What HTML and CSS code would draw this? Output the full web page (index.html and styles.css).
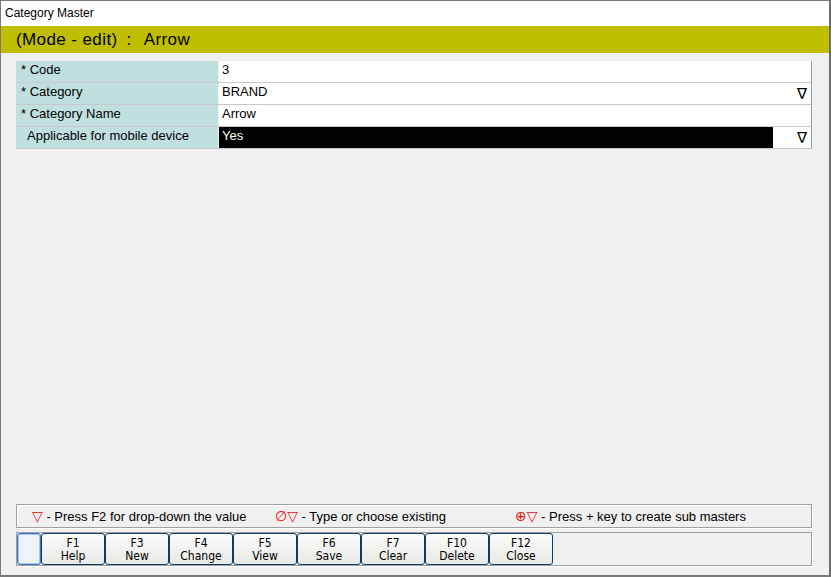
FILE: index.html
```html
<!DOCTYPE html>
<html>
<head>
<meta charset="utf-8">
<link rel="stylesheet" href="styles.css">
</head>
<body>
<div class="window">
  <div class="titlebar">Category Master</div>
  <div class="modebar"><span>(Mode - edit)</span><span class="colon">:</span><span>Arrow</span></div>
  <div class="form">
    <div class="row">
      <div class="label">* Code</div>
      <div class="value">3</div>
    </div>
    <div class="row">
      <div class="label">* Category</div>
      <div class="value">BRAND<span class="dd">∇</span></div>
    </div>
    <div class="row">
      <div class="label">* Category Name</div>
      <div class="value">Arrow</div>
    </div>
    <div class="row last">
      <div class="label indent">Applicable for mobile device</div>
      <div class="value split"><span class="sel">Yes</span><span class="dd">∇</span></div>
    </div>
  </div>
  <div class="spacer"></div>
  <div class="legend">
    <span class="item"><span class="red">▽</span> - Press F2 for drop-down the value</span>
    <span class="item"><span class="red">∅▽</span> - Type or choose existing</span>
    <span class="item"><span class="red">⊕▽</span> - Press + key to create sub masters</span>
  </div>
  <div class="buttons">
    <div class="btn focus"></div>
    <div class="btn">F1<br>Help</div>
    <div class="btn">F3<br>New</div>
    <div class="btn">F4<br>Change</div>
    <div class="btn">F5<br>View</div>
    <div class="btn">F6<br>Save</div>
    <div class="btn">F7<br>Clear</div>
    <div class="btn">F10<br>Delete</div>
    <div class="btn">F12<br>Close</div>
  </div>
</div>
</body>
</html>
```
FILE: styles.css
```css
html, body {
  margin: 0;
  padding: 0;
}
body {
  font-family: "Liberation Sans", Arial, sans-serif;
  font-size: 13px;
  color: #000;
}
.window {
  width: 831px;
  height: 577px;
  box-sizing: border-box;
  border: 1px solid #7a7a7a;
  border-right: 2px solid #6e6e6e;
  border-bottom: 2px solid #7a7a7a;
  background: #f0f0f0;
  display: flex;
  flex-direction: column;
}
.titlebar {
  height: 25px;
  background: #fff;
  font-size: 12px;
  line-height: 24px;
  padding-left: 4px;
}
.modebar {
  height: 27px;
  background: #bfbf00;
  font-size: 17px;
  letter-spacing: 0.4px;
  line-height: 28px;
  padding-left: 15px;
  display: flex;
}
.modebar .colon {
  margin: 0 12px 0 9px;
}
.form {
  margin: 8px 17px 0 15px;
  border-right: 1px solid #a0a0a0;
  display: flex;
  flex-direction: column;
}
.row {
  display: flex;
  height: 22px;
  border-bottom: 1px solid #c8c8c8;
  box-sizing: border-box;
}
.label {
  width: 202px;
  background: #c0e0e0;
  padding-left: 5px;
  line-height: 18px;
  box-sizing: border-box;
  margin-right: 1px;
}
.label.indent {
  padding-left: 11px;
}
.value {
  flex: 1;
  background: #fff;
  display: flex;
  align-items: flex-start;
  padding-left: 3px;
  line-height: 18px;
}
.value.split {
  padding-left: 0;
}
.sel {
  background: #000;
  color: #fffff0;
  width: 554px;
  height: 100%;
  padding-left: 3px;
  box-sizing: border-box;
  line-height: 18px;
}
.dd {
  margin-left: auto;
  margin-right: 4px;
  font-size: 15px;
  line-height: 22px;
  font-family: "DejaVu Sans", sans-serif;
}
.spacer {
  flex: 1;
}
.legend {
  margin: 0 17px 0 15px;
  height: 24px;
  box-sizing: border-box;
  border: 1px solid #a0a0a0;
  box-shadow: 1px 1px 0 #fff inset, 1px 1px 0 #fff;
  display: flex;
  align-items: center;
  padding-left: 15px;
  font-size: 13px;
}
.legend .item:nth-child(1) {
  width: 243px;
}
.legend .item:nth-child(2) {
  width: 240px;
}
.red {
  color: #e31010;
  font-family: "DejaVu Sans", sans-serif;
  font-size: 14px;
}
.buttons {
  margin: 4px 17px 9px 15px;
  height: 34px;
  box-sizing: border-box;
  border: 1px solid #a0a0a0;
  box-shadow: 1px 1px 0 #fff;
  display: flex;
  padding: 0;
}
.btn {
  width: 64px;
  height: 32px;
  box-sizing: border-box;
  border: 1px solid #0f3c66;
  border-radius: 3px;
  background: linear-gradient(#fbfbfb, #e9e9e6);
  text-align: center;
  font-family: "DejaVu Sans Condensed", "DejaVu Sans", sans-serif;
  font-size: 12px;
  line-height: 13px;
  padding-top: 3px;
}
.btn.focus {
  width: 24px;
  border: 1px solid #3a6fc4;
  background: #eef3fa;
  box-shadow: inset 0 0 0 1px #a8c6ee;
}
```
